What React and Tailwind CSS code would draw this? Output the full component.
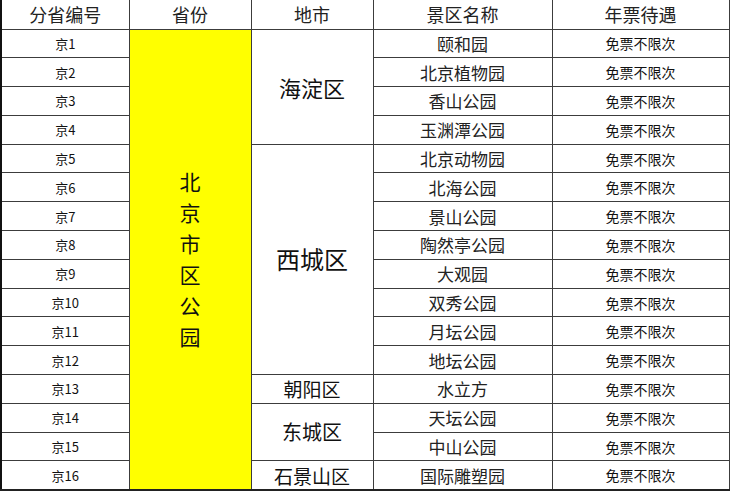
const rows = [
  '颐和园', '北京植物园', '香山公园', '玉渊潭公园',
  '北京动物园', '北海公园', '景山公园', '陶然亭公园',
  '大观园', '双秀公园', '月坛公园', '地坛公园',
  '水立方', '天坛公园', '中山公园', '国际雕塑园',
];

// 地市 cells: start row index -> [span, name, size class]
const cities = {
  0: [4, '海淀区', 'text-[22px]'],
  4: [8, '西城区', 'text-[24px]'],
  12: [1, '朝阳区', 'text-[19px]'],
  13: [2, '东城区', 'text-[20px]'],
  15: [1, '石景山区', 'text-[19px]'],
};

const cell = 'border border-[#3c3c3c] text-center align-middle p-0';

export default function App() {
  return (
    <div className="w-[730px] h-[492px] bg-white overflow-hidden">
      <table
        className="table-fixed border-collapse w-[728px] border-l-2 border-b-2 border-l-[#111] border-b-[#222] text-[#111]"
        style={{ fontFamily: '"Noto Sans CJK SC", "Noto Sans", sans-serif' }}
      >
        <colgroup>
          <col className="w-[128px]" />
          <col className="w-[122px]" />
          <col className="w-[122px]" />
          <col className="w-[179px]" />
          <col className="w-[177px]" />
        </colgroup>
        <thead>
          <tr className="h-[29px] text-[18px] leading-none text-[#222]">
            <th className={cell + ' font-normal border-t-0'}>分省编号</th>
            <th className={cell + ' font-normal border-t-0'}>省份</th>
            <th className={cell + ' font-normal border-t-0'}>地市</th>
            <th className={cell + ' font-normal border-t-0'}>景区名称</th>
            <th className={cell + ' font-normal border-t-0'}>年票待遇</th>
          </tr>
        </thead>
        <tbody>
          {rows.map((name, i) => (
            <tr key={name} className="h-[28.8px] leading-none">
              <td className={cell + ' text-[13px]'}>京{i + 1}</td>
              {i === 0 && (
                <td rowSpan={16} className={cell + ' bg-[#ffff00]'}>
                  <div className="flex flex-col items-center text-[21px] leading-[31px]">
                    {'北京市区公园'.split('').map((c, k) => (
                      <span key={k}>{c}</span>
                    ))}
                  </div>
                </td>
              )}
              {cities[i] && (
                <td rowSpan={cities[i][0]} className={cell + ' ' + cities[i][2]}>
                  {cities[i][1]}
                </td>
              )}
              <td className={cell + ' text-[17px] text-[#222]'}>{name}</td>
              <td className={cell + ' text-[14px]'}>免票不限次</td>
            </tr>
          ))}
        </tbody>
      </table>
    </div>
  );
}
